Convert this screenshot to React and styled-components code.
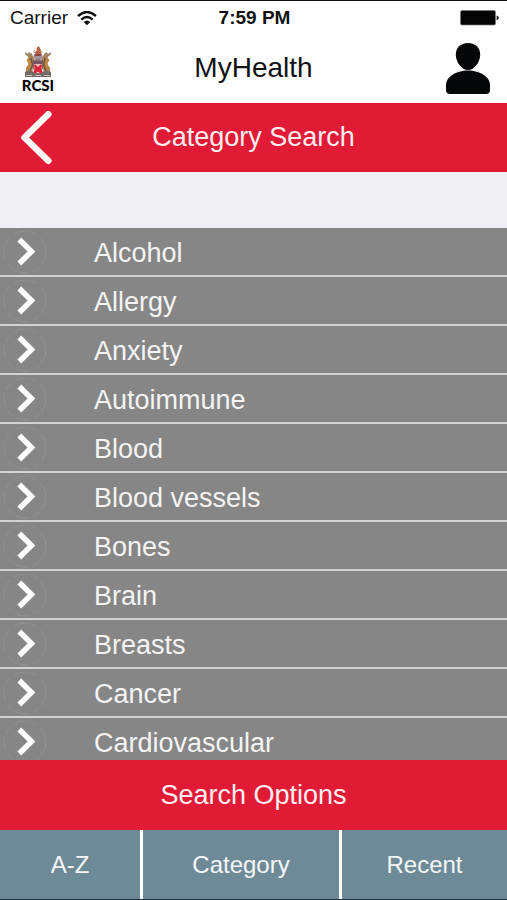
import React from 'react';
import styled, { createGlobalStyle } from 'styled-components';

const GlobalStyle = createGlobalStyle`
    * {
        box-sizing: border-box;
    }

    body {
        margin: 0;
        font-family: "Liberation Sans", Arial, sans-serif;
    }

    button, input {
        font-family: inherit;
        border: 0;
        padding: 0;
        background: none;
    }
`;

const Screen = styled.div`
    height: 100vh;
    display: flex;
    flex-direction: column;
    overflow: hidden;
    background-color: #FFFFFF;
    border-top: 1px solid #101010;
    border-bottom: 1px solid #1C333F;
`;

const StatusBar = styled.div`
    height: 34px;
    flex-shrink: 0;
    display: grid;
    grid-template-columns: 1fr auto 1fr;
    align-items: center;
    padding: 0 8px 0 10px;
    font-size: 19px;
    color: #111111;
`;

const Carrier = styled.div`
    display: flex;
    align-items: center;
    gap: 9px;
`;

const Battery = styled.svg`
    justify-self: end;
`;

const Header = styled.header`
    height: 68px;
    flex-shrink: 0;
    display: grid;
    grid-template-columns: 1fr auto 1fr;
    align-items: center;
    padding: 0 16px;
`;

const AppName = styled.h1`
    margin: 0;
    padding-bottom: 2px;
    font-size: 28px;
    font-weight: 400;
    color: #111111;
`;

const Logo = styled.div`
    width: 44px;
    display: flex;
    flex-direction: column;
    align-items: center;
    font-family: "Lato", sans-serif;
    font-size: 15px;
    line-height: 15px;
    font-weight: 900;
    color: #050505;
`;

const ProfileButton = styled.button`
    justify-self: end;
    display: flex;
`;

const Banner = styled.div`
    height: ${props => props.$tall ? "70px" : "69px"};
    flex-shrink: 0;
    display: grid;
    grid-template-columns: 1fr auto 1fr;
    align-items: center;
    padding: 0 20px;
    background-color: #E11A35;
`;

const BannerTitle = styled.h2`
    grid-column: 2;
    margin: 0;
    font-size: 27px;
    font-weight: 400;
    color: #FCEEF0;
`;

const BackButton = styled.button`
    justify-self: start;
    display: flex;
`;

const SearchInput = styled.input`
    width: 100%;
    height: 56px;
    flex-shrink: 0;
    padding: 0 20px;
    font-size: 24px;
    outline: none;
    background-color: #EFEFF4;
`;

const List = styled.ul`
    flex: 1;
    min-height: 0;
    margin: 0;
    padding: 0;
    list-style: none;
    overflow-y: auto;
    scrollbar-width: none;
    background-color: #868686;
`;

const Row = styled.li`
    height: 49px;
    border-bottom: 2px solid #D2D2D2;
`;

const RowButton = styled.button`
    width: 100%;
    height: 100%;
    display: flex;
    align-items: center;
    gap: 47px;
    padding-top: 4px;
    font-size: 27px;
    text-align: left;
    color: #F4F4F4;

    svg {
        flex-shrink: 0;
    }
`;

const Tabs = styled.nav`
    height: 69px;
    flex-shrink: 0;
    display: grid;
    grid-template-columns: 140fr 199fr 168fr;
`;

const Tab = styled.button`
    font-size: 24px;
    color: #F3F7F9;
    background-color: #6F8A97;

    & + & {
        border-left: 3px solid #FFFFFF;
    }
`;

const WifiIcon = () => (
    <svg width="20" height="15" viewBox="0 0 20 15" fill="none" stroke="#111111" strokeWidth="2.4">
        <path d="M1 5 Q10 -3 19 5" />
        <path d="M4.3 8.7 Q10 3.4 15.7 8.7" />
        <path d="M6.7 11 Q10 8 13.3 11 L10 14.2 Z" fill="#111111" stroke="none" />
    </svg>
);

const BatteryIcon = () => (
    <Battery width="39" height="16" viewBox="0 0 39 16">
        <rect x="0.5" y="0.5" width="35" height="14.5" rx="1.5" fill="#050505" stroke="#777777" strokeWidth="0.7" />
        <path d="M36.6 5.4 Q39 6 39 7.8 Q39 9.6 36.6 10.2 Z" fill="#222222" />
    </Battery>
);

const Crest = () => (
    <svg width="28" height="32" viewBox="0 0 28 32">
        {/* eagle and helmet */}
        <path d="M12.5 2 L14.5 0 L16 2 L17 5 L17.5 9 L11.5 9 L11 6 L13 4 Z" fill="#B9603F" />
        <path d="M11 4 L9.5 6 L11.5 7 M17 5 L18.5 7" fill="none" stroke="#AAA3A0" />
        <path d="M10 8 H18 L19 12 L14 15 L9 12 Z" fill="#A39396" />
        <path d="M11 8 H17 V10 H11 Z" fill="#8B4646" />
        {/* supporters */}
        <path d="M1 6 L3.5 8 L6 6 L8.5 9 L10 13 L9.5 20 L8 27 L1.5 28 L2 22 L4.5 18 L3 14 L4.5 11 L1.5 9 Z" fill="#A98555" />
        <path d="M27 6 L24.5 8 L22 6 L19.5 9 L18 13 L18.5 20 L20 27 L26.5 28 L26 22 L23.5 18 L25 14 L23.5 11 L26.5 9 Z" fill="#A98555" />
        <path d="M3 14 L7 17 L4 22 M25 14 L21 17 L24 22" fill="none" stroke="#C08A39" strokeWidth="2" />
        <path d="M7 12 L8.5 19 L6 25 M21 12 L19.5 19 L22 25" fill="none" stroke="#6C5038" strokeWidth="1.3" />
        <path d="M1 7 L5 9 L8 8 M27 7 L23 9 L20 8" fill="none" stroke="#8D8984" />
        {/* shield */}
        <path d="M9.5 14 H18.5 V22 Q18 26 14 28 Q10 26 9.5 22 Z" fill="#F0DBDA" stroke="#624F54" strokeWidth="0.8" />
        <path d="M9.8 14.4 H18.2 V18.2 H9.8 Z" fill="#795464" />
        <path d="M10.3 19.3 L17.7 26 M17.7 19.3 L10.3 26" stroke="#DD2738" strokeWidth="2.6" />
        {/* motto scroll */}
        <path d="M1 26 Q7 24 10 26 Q14 29 18 26 Q21 24 27 26 V31 H1 Z" fill="#6F6C68" />
        <path d="M10.5 22 L17.5 27 M17.5 22 L10.5 27" stroke="#DD2738" strokeWidth="2" />
        <path d="M2 29.5 H8 M11 29.5 H17 M20 29.5 H26" stroke="#C9C0B0" />
    </svg>
);

const PersonIcon = () => (
    <svg width="46" height="52" viewBox="0 0 46 52" fill="#050808">
        <path d="M23 0 C30.5 0 35.2 5 35.2 11.5 C35.2 19 29.5 27 23 27 C16.5 27 10.8 19 10.8 11.5 C10.8 5 15.5 0 23 0 Z" />
        <path d="M23 27.5 C35 27.5 45 34 45 42 V47 Q45 51 41 51 H5 Q1 51 1 47 V42 C1 34 11 27.5 23 27.5 Z" />
    </svg>
);

const BackIcon = () => (
    <svg width="32" height="54" viewBox="0 0 32 54" fill="none">
        <path d="M28.3 3.2 L4.5 26.5 L28.3 49.8" stroke="#FFFAF6" strokeWidth="6.5" strokeLinecap="round" strokeLinejoin="round" />
    </svg>
);

const ChevronIcon = () => (
    <svg width="47" height="45" viewBox="0 0 47 45" fill="none">
        <circle cx="25" cy="21" r="21" stroke="#949494" strokeWidth="0.8" strokeDasharray="14 3 7 5" />
        <path d="M19.3 8.5 L31.5 20.5 L19.3 32.5" stroke="#FFFFFF" strokeWidth="5.4" />
    </svg>
);

const categories = [
    "Alcohol",
    "Allergy",
    "Anxiety",
    "Autoimmune",
    "Blood",
    "Blood vessels",
    "Bones",
    "Brain",
    "Breasts",
    "Cancer",
    "Cardiovascular"
];

const App = () => {
    return (
        <Screen>
            <GlobalStyle />
            <StatusBar>
                <Carrier>Carrier <WifiIcon /></Carrier>
                <strong>7:59 PM</strong>
                <BatteryIcon />
            </StatusBar>
            <Header>
                <Logo>
                    <Crest />
                    RCSI
                </Logo>
                <AppName>MyHealth</AppName>
                <ProfileButton aria-label="Profile"><PersonIcon /></ProfileButton>
            </Header>
            <Banner>
                <BackButton aria-label="Back"><BackIcon /></BackButton>
                <BannerTitle>Category Search</BannerTitle>
            </Banner>
            <SearchInput type="search" aria-label="Search categories" />
            <List>
                {categories.map(category => (
                    <Row key={category}>
                        <RowButton><ChevronIcon />{category}</RowButton>
                    </Row>
                ))}
            </List>
            <Banner $tall>
                <BannerTitle>Search Options</BannerTitle>
            </Banner>
            <Tabs>
                <Tab>A-Z</Tab>
                <Tab>Category</Tab>
                <Tab>Recent</Tab>
            </Tabs>
        </Screen>
    )
}

export default App
